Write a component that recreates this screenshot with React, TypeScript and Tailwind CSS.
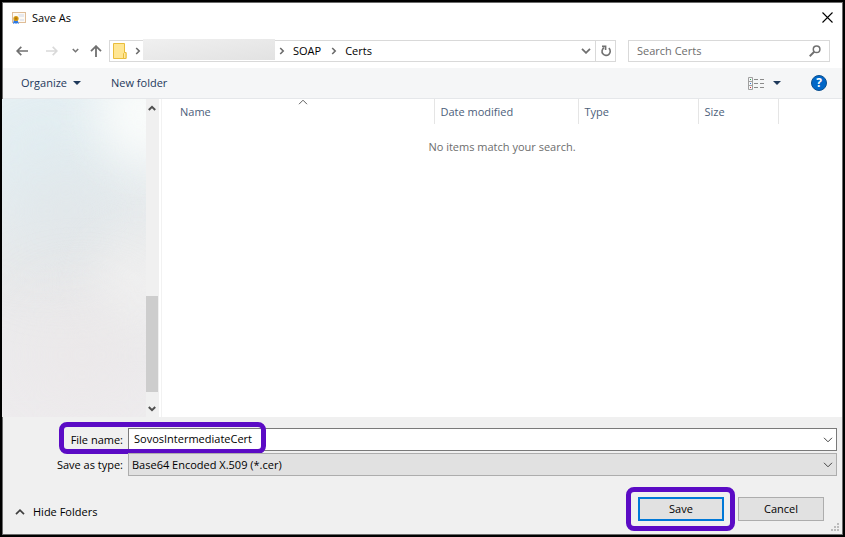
import type { ReactNode } from 'react';

type GlyphProps = { className?: string };

const ChevronRight = ({ className = '' }: GlyphProps) => (
  <svg viewBox="0 0 6 8" className={`h-2 w-1.5 shrink-0 ${className}`} fill="none" stroke="#6b6b6b" strokeWidth="1.6">
    <path d="M1.2 1l3 3-3 3" />
  </svg>
);

const ChevronDown = ({ className = '' }: GlyphProps) => (
  <svg viewBox="0 0 10 6" className={`h-1.5 w-2.5 ${className}`} fill="none" stroke="currentColor">
    <path d="M1 .8l4 4 4-4" />
  </svg>
);

const ChevronUp = ({ className = '' }: GlyphProps) => (
  <svg viewBox="0 0 10 6" className={`h-1.5 w-2.5 ${className}`} fill="none" stroke="currentColor">
    <path d="M1 5.2l4-4 4 4" />
  </svg>
);

const ScrollArrow = ({ className = '' }: GlyphProps) => (
  <svg viewBox="0 0 8 6" className={`h-1.5 w-2 ${className}`} fill="none" stroke="#505050" strokeWidth="2">
    <path d="M.8 5L4 1.8 7.200 5" />
  </svg>
);

const Caret = () => (
  <svg viewBox="0 0 8 4" className="h-1 w-2" fill="#1e395b">
    <path d="M0 0h8L4 4z" />
  </svg>
);

const CertificateIcon = () => (
  <svg viewBox="0 0 16 14" className="h-3.5 w-4">
    <rect x="1.500" y="1.500" width="13" height="10" fill="#fdfaf5" stroke="#dfbd98" />
    <path d="M7 3h6v3H8zM9 8h4v2H9z" fill="#e7e9ee" />
    <path d="M3 8l-1 5 2-1 1 1V8zM6 8l2 5-2-1-1 1V8z" fill="#2b78e4" />
    <circle cx="5" cy="7.5" r="2.6" fill="#d69a14" />
    <circle cx="5" cy="7.5" r="1.2" fill="#b67a08" />
  </svg>
);

const FolderIcon = () => (
  <svg viewBox="0 0 14 16" className="h-4 w-3.5 shrink-0">
    <path d="M.5.5h11v9h1.5v6H.5z" fill="#ffe693" stroke="#e9bd3b" />
    <path d="M10.5 15.5v-5l1-1H13v6z" fill="#ffe9a2" stroke="#e9bd3b" />
  </svg>
);

const TitleBar = () => (
  <header className="flex h-[30px] items-center pr-2 pl-2">
    <CertificateIcon />
    <h1 className="ml-[5px] text-black">Save As</h1>
    <button aria-label="Close" className="ml-auto px-px pb-0.5">
      <svg viewBox="0 0 11 11" className="size-[11px]" stroke="#000" strokeWidth="1.1">
        <path d="M.5.5l10 10M10.5.5l-10 10" />
      </svg>
    </button>
  </header>
);

const NavBar = () => (
  <nav className="flex h-[35px] items-center pr-3 pl-[13px]">
    <button aria-label="Back">
      <svg viewBox="0 0 12 10" className="h-2.5 w-3" fill="none" stroke="#707070" strokeWidth="1.7">
        <path d="M12 5H1.2M5.3.8L1.1 5l4.2 4.2" />
      </svg>
    </button>
    <button aria-label="Forward" className="ml-[18px]">
      <svg viewBox="0 0 12 10" className="h-2.5 w-3" fill="none" stroke="#d9d9d9" strokeWidth="1.7">
        <path d="M0 5h10.8M6.7.8L10.9 5 6.7 9.2" />
      </svg>
    </button>
    <button aria-label="Recent locations" className="ml-3.5">
      <svg viewBox="0 0 7 5" className="h-[5px] w-[7px]" fill="none" stroke="#767676" strokeWidth="1.6">
        <path d="M.8 1l2.7 2.7L6.2 1" />
      </svg>
    </button>
    <button aria-label="Up" className="ml-[11px]">
      <svg viewBox="0 0 12 12" className="size-3" fill="none" stroke="#707070" strokeWidth="1.8">
        <path d="M6 12V1.4M1 6.2l5-5 5 5" />
      </svg>
    </button>
    <div className="ml-[7px] flex h-[22px] flex-1 items-center border border-[#d9d9d9] pl-[3px] text-black">
      <FolderIcon />
      <ChevronRight className="ml-2" />
      <span className="-mt-0.5 ml-0.5 h-[21px] w-[132px] self-start bg-linear-to-br from-[#f0f0f0] to-[#e2e2e2]" />
      <ChevronRight className="ml-1" />
      <a href="#soap" className="ml-2">SOAP</a>
      <ChevronRight className="ml-2.5" />
      <a href="#certs" className="ml-2">Certs</a>
      <button aria-label="Previous locations" className="ml-auto px-1 text-[#707070]">
        <ChevronDown className="stroke-[1.8]" />
      </button>
      <button aria-label="Refresh" className="flex h-full w-5 items-center justify-center border-l border-[#d9d9d9]">
        <svg viewBox="0 0 12 12" className="size-3" fill="none" stroke="#707070" strokeWidth="1.6">
          <path d="M8.8 3.2A4.1 4.1 0 1 1 4 2.8" />
          <path d="M2 1.4h3.6V5" />
        </svg>
      </button>
    </div>
    <label className="ml-3 flex h-[22px] w-[202px] items-center border border-[#d9d9d9] pr-2 pl-2">
      <input
        type="search"
        aria-label="Search Certs"
        placeholder="Search Certs"
        className="min-w-0 flex-1 outline-none placeholder:text-[#6d6d6d]"
      />
      <svg viewBox="0 0 12 12" className="size-3" fill="none" stroke="#707070" strokeWidth="1.5">
        <circle cx="7.6" cy="4.3" r="3.3" />
        <path d="M5.2 6.8L.7 11.2" strokeWidth="1.9" />
      </svg>
    </label>
  </nav>
);

const Toolbar = () => (
  <div className="flex h-[31px] items-center border-b border-[#e5e7ea] bg-[#f5f6f7] pr-[15px] pl-[18px] text-[#1e395b]">
    <button className="flex items-center gap-1.5">
      Organize <Caret />
    </button>
    <button className="ml-[30px]">New folder</button>
    <button aria-label="Change your view" className="ml-auto">
      <svg viewBox="0 0 16 13" className="h-[13px] w-4" fill="none">
        <path d="M.5.5h4v12h-4zM.5 4.5h4M.5 8.5h4" stroke="#a0a0a0" />
        <path d="M6 2.5h4M12 2.5h4M6 6.5h4M12 6.5h4M6 10.5h4M12 10.5h4" stroke="#8b8b8b" />
        <path d="M2 2h1v1H2z" fill="#35a055" />
        <path d="M2 6h1v1H2z" fill="#3778d8" />
        <path d="M2 10h1v1H2z" fill="#dc2f38" />
      </svg>
    </button>
    <button aria-label="More options" className="ml-[9px]">
      <Caret />
    </button>
    <button
      aria-label="Help"
      className="ml-[30px] flex size-4 items-center justify-center rounded-full border border-[#0b4f8f] bg-[#0067c8] text-xs font-bold text-white"
    >
      ?
    </button>
  </div>
);

const Sidebar = () => (
  <aside className="-ml-px flex w-[157px] shrink-0 bg-[#f0f0f0] pr-px">
    <div className="relative flex-1 overflow-hidden bg-linear-to-b from-[#edf2f4] via-[#e9eaeb] to-[#eeecee]">
      <div className="absolute -top-10 -left-12 size-44 rounded-full bg-[#e2eef2] blur-2xl" />
      <div className="absolute top-16 left-4 size-24 rounded-full bg-[#dfe3e6] blur-2xl" />
      <div className="absolute -top-8 left-24 size-24 rounded-full bg-[#fafcfb] blur-xl" />
      <div className="absolute top-36 left-24 size-20 rounded-full bg-[#f1f1f1] blur-xl" />
      <div className="absolute top-52 left-8 size-24 rounded-full bg-[#ebe7e8] blur-2xl" />
    </div>
    <div className="flex w-3 flex-col items-center">
      <ScrollArrow className="mt-1.5" />
      <div className="mt-auto h-24 w-full bg-[#cdcdcd]" />
      <ScrollArrow className="mt-3.5 mb-[5px] rotate-180" />
    </div>
  </aside>
);

const columns = [
  { label: 'Date modified', width: 'w-36' },
  { label: 'Type', width: 'w-[120px]' },
  { label: 'Size', width: 'w-20' },
];

const FileList = () => (
  <main className="ml-0.5 flex-1 border-l border-[#f2f2f2]">
    <table className="w-full table-fixed text-left">
      <thead>
        <tr className="h-[25px] text-[#4c607a]">
          <th className="relative border-r border-[#e5e5e5] pl-[18px] font-normal">
            Name
            <ChevronUp className="absolute top-0 left-1/2 text-[#5f5f5f]" />
          </th>
          {columns.map((col) => (
            <th key={col.label} className={`${col.width} border-r border-[#e5e5e5] pl-1.5 font-normal`}>
              {col.label}
            </th>
          ))}
          <td className="w-16" />
        </tr>
      </thead>
      <tbody>
        <tr>
          <td colSpan={5} className="pt-[15px] text-center text-[#6d6d6d]">
            No items match your search.
          </td>
        </tr>
      </tbody>
    </table>
  </main>
);

const Highlight = ({ className }: { className: string }) => (
  <div className={`pointer-events-none absolute rounded-lg border-5 border-[#5b0bc5] ${className}`} />
);

const Field = ({ id, label, children }: { id: string; label: string; children: ReactNode }) => (
  <div className="relative flex items-center">
    <label htmlFor={id} className="w-[125px] pr-[5px] text-right">
      {label}
    </label>
    {children}
  </div>
);

const Footer = () => (
  <footer className="relative h-[117px] bg-[#f0f0f0] pt-[11px] pr-[5px] text-black">
    <div className="flex flex-col gap-0.5">
      <Field id="file-name" label="File name:">
        <div className="flex h-[23px] flex-1 items-center border border-[#7a7a7a] bg-white">
          <input id="file-name" defaultValue="SovosIntermediateCert" className="min-w-0 flex-1 pb-0.5 pl-[5px] outline-none" />
          <button aria-label="Recent file names" className="pr-[3px] text-[#444]">
            <ChevronDown />
          </button>
        </div>
        <Highlight className="-top-1.5 left-14 h-8 w-[207px]" />
      </Field>
      <Field id="file-type" label="Save as type:">
        <select
          id="file-type"
          className="h-[23px] flex-1 appearance-none border border-[#adadad] bg-[#e1e1e1] pl-[3px] outline-none"
        >
          <option>Base64 Encoded X.509 (*.cer)</option>
        </select>
        <ChevronDown className="pointer-events-none absolute right-1 text-[#444]" />
      </Field>
    </div>
    <div className="mt-[21px] flex items-center pr-[13px] pl-3">
      <button className="mt-1.5 flex items-center gap-2">
        <ChevronUp className="stroke-[1.7] text-[#404040]" />
        Hide Folders
      </button>
      <div className="relative ml-auto">
        <button className="h-6 w-[86px] border-2 border-[#0078d7] bg-[#e1e1e1]">Save</button>
        <Highlight className="-top-2.5 -left-3 h-11 w-[109px]" />
      </div>
      <button className="ml-3.5 h-6 w-[86px] border border-[#adadad] bg-[#e1e1e1]">Cancel</button>
    </div>
    <svg viewBox="0 0 8 8" className="absolute right-[3px] bottom-[3px] size-2" fill="#bcbcbc">
      <path d="M6 0h2v2H6zM3 3h2v2H3zM6 3h2v2H6zM0 6h2v2H0zM3 6h2v2H3zM6 6h2v2H6z" />
    </svg>
  </footer>
);

export default function App() {
  return (
    <div className="h-screen border-2 border-black bg-white font-['Open_Sans','Noto_Sans',sans-serif] text-[11px]/4">
      <div className="flex h-full flex-col border border-[#6b6b6b]">
        <TitleBar />
        <NavBar />
        <Toolbar />
        <div className="flex min-h-0 flex-1">
          <Sidebar />
          <FileList />
        </div>
        <Footer />
      </div>
    </div>
  );
}
